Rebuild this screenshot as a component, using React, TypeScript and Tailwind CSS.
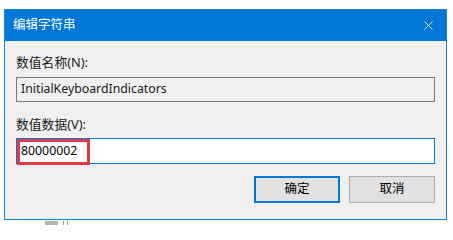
import { X } from "lucide-react"

const FONT = { fontFamily: '"Segoe UI", "Noto Sans", "Noto Sans CJK SC", sans-serif' }

function Button({ label, primary }: { label: string; primary?: boolean }) {
  return (
    <button
      className={
        primary
          ? "flex h-[27px] w-[86px] items-center justify-center border-2 border-[#0078d7] bg-[#e1e1e1] text-[12.5px] text-black"
          : "flex h-[27px] w-[86px] items-center justify-center border border-[#adadad] bg-[#e1e1e1] text-[12.5px] text-black"
      }
    >
      {label}
    </button>
  )
}

export default function App() {
  return (
    <div className="relative h-[225px] w-[453px] overflow-hidden bg-white" style={FONT}>
      <div className="ml-[4px] mt-[9px] flex h-[211px] w-[443px] flex-col border border-[#1883d7] bg-[#f0f0f0]">
        {/* title bar */}
        <div className="flex h-[31px] shrink-0 items-center justify-between bg-[#0078d7] pl-[8px] pr-[10px]">
          <span className="text-[12.5px] text-white">编辑字符串</span>
          <X size={15} strokeWidth={1.3} className="text-white" />
        </div>

        <div className="flex flex-col px-[11px]">
          <div className="mt-[13px] text-[12.8px] leading-[16px] text-[#1a1a1a]">数值名称(N):</div>
          <div className="mt-[7px] flex h-[25px] items-center border border-[#7a7a7a] bg-[#f0f0f0] px-[4px] text-[12.3px] text-[#1a1a1a]">
            InitialKeyboardIndicators
          </div>

          <div className="mt-[14px] text-[12.8px] leading-[16px] text-[#1a1a1a]">数值数据(V):</div>
          <div className="relative mt-[6px] flex h-[26px] items-center border border-[#0078d7] bg-white pl-[4px] text-[12.3px] text-black">
            80000002
            <div className="absolute left-[0px] top-[0px] h-[26px] w-[73px] border-[3px] border-[#e53a44]" />
          </div>

          <div className="mt-[12px] flex justify-end gap-[9px]">
            <Button label="确定" primary />
            <Button label="取消" />
          </div>
        </div>
      </div>
      <div className="absolute left-[45px] top-[221px] h-[4px] w-[13px] bg-[#b5b5b5]" />
      <div className="absolute left-[63px] top-[221px] h-[4px] w-[1px] bg-[#9a9a9a]" />
      <div className="absolute left-[67px] top-[221px] h-[4px] w-[1px] bg-[#9a9a9a]" />
    </div>
  )
}
